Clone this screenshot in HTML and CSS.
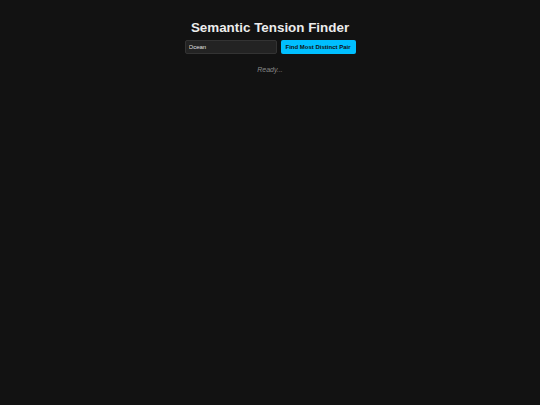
FILE: index.html
```html
<!DOCTYPE html>
<html lang="en">
<head>
<meta charset="utf-8">
<title>Semantic Tension Finder</title>
<link rel="stylesheet" href="styles.css">
</head>
<body>
<main class="app">
  <h1 class="title">Semantic Tension Finder</h1>
  <div class="controls">
    <input class="word-input" type="text" value="Ocean">
    <button class="find-btn">Find Most Distinct Pair</button>
  </div>
  <p class="status">Ready...</p>
</main>
</body>
</html>
```

FILE: styles.css
```css
html, body {
  margin: 0;
  padding: 0;
  background: #121212;
  height: 100%;
}
body {
  font-family: "Liberation Sans", Arial, sans-serif;
  color: #e0e0e0;
}
.app {
  display: flex;
  flex-direction: column;
  align-items: center;
  padding-top: 20px;
}
.title {
  margin: 0;
  font-size: 13.4px;
  line-height: 16px;
  font-weight: bold;
  color: #ececec;
}
.controls {
  display: flex;
  gap: 4px;
  margin-top: 4px;
}
.word-input {
  box-sizing: border-box;
  width: 92px;
  height: 14px;
  padding: 0 3px;
  background: #232323;
  border: 1px solid #333;
  border-radius: 2px;
  color: #e0e0e0;
  font-family: "Liberation Sans", Arial, sans-serif;
  font-size: 6px;
  outline: none;
}
.find-btn {
  box-sizing: border-box;
  width: 75px;
  height: 14px;
  padding: 0;
  background: #00bfff;
  border: none;
  border-radius: 2px;
  color: #111;
  font-family: "Liberation Sans", Arial, sans-serif;
  font-size: 6px;
  font-weight: bold;
}
.status {
  margin: 11px 0 0;
  font-size: 7px;
  line-height: 9px;
  font-style: italic;
  color: #888;
}
```
